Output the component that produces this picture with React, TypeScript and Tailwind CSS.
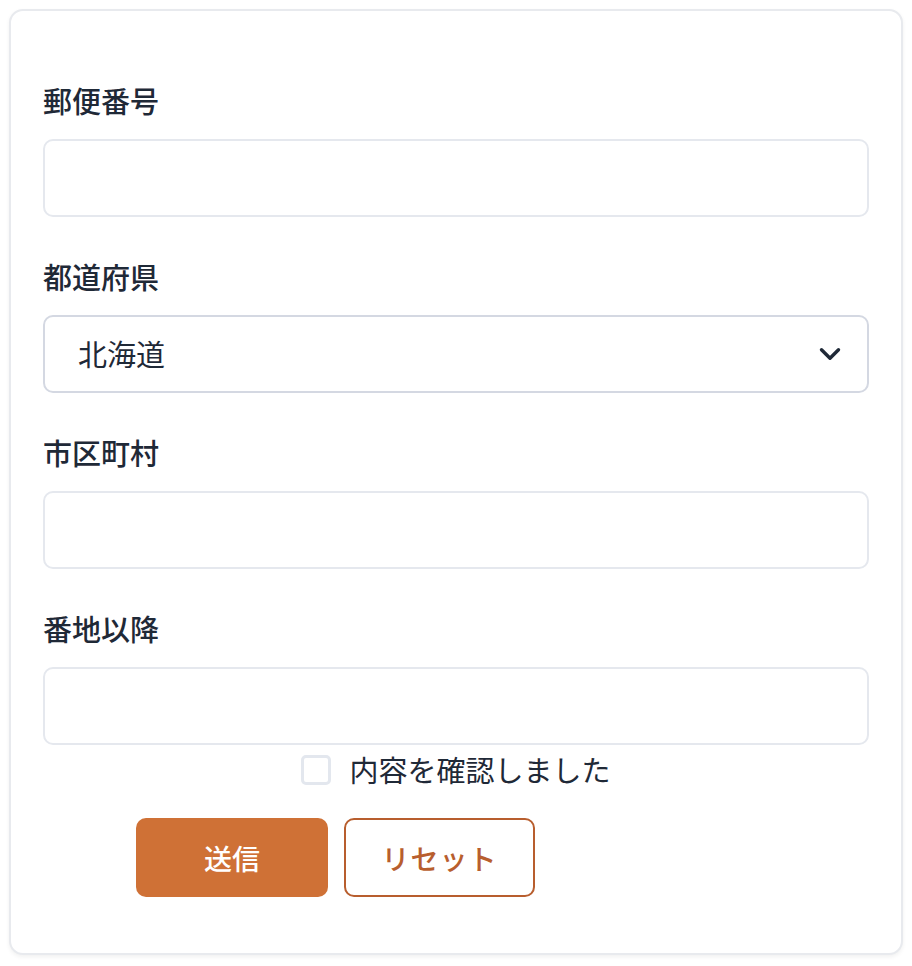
import { ChevronDown } from 'lucide-react';

const fields = [
  { label: '郵便番号', kind: 'input' },
  { label: '都道府県', kind: 'select' },
  { label: '市区町村', kind: 'input' },
  { label: '番地以降', kind: 'input' },
];

function Field({ label, kind }: { label: string; kind: string }) {
  return (
    <div className="flex flex-col">
      <label className="text-[29px] leading-[40px] font-medium text-[#1f2937] mb-[19px]">{label}</label>
      {kind === 'select' ? (
        <div className="relative">
          <select className="w-full h-[78px] appearance-none rounded-[10px] border-2 border-[#d4d8e2] bg-white pl-[33px] text-[29px] text-[#1f2937] outline-none">
            <option>北海道</option>
          </select>
          <ChevronDown
            className="absolute right-[22px] top-1/2 -translate-y-1/2 pointer-events-none text-[#1f2937]"
            size={34}
            strokeWidth={2.4}
          />
        </div>
      ) : (
        <input type="text" className="w-full h-[78px] rounded-[10px] border-2 border-[#e5e8ee] bg-white px-4 text-[29px] outline-none" />
      )}
    </div>
  );
}

export default function App() {
  return (
    <div className="min-h-screen bg-white p-[9px]" style={{ fontFamily: '"Noto Sans CJK JP", "Noto Sans", sans-serif' }}>
      <div className="w-[894px] h-[946px] rounded-[14px] border-2 border-[#e8eaee] bg-white shadow-[0_2px_4px_rgba(0,0,0,0.06)] px-[32px] pt-[69px]">
        <div className="flex flex-col gap-[39px]">
          {fields.map((f) => (
            <Field key={f.label} label={f.label} kind={f.kind} />
          ))}
        </div>
        <div className="flex items-center justify-center gap-[18px] mt-[5px] h-[40px]">
          <span className="w-[30px] h-[30px] rounded-[5px] border-[3px] border-[#e3e7ee] bg-white" />
          <span className="text-[29px] text-[#1f2937]">内容を確認しました</span>
        </div>
        <div className="flex gap-[16px] mt-[28px] pl-[93px]">
          <button className="w-[192px] h-[79px] rounded-[10px] bg-[#cf7136] text-white text-[28px] font-medium">送信</button>
          <button className="w-[191px] h-[79px] rounded-[10px] border-2 border-[#b85e2e] bg-white text-[#b85e2e] text-[28px] font-medium tracking-[1px]">リセット</button>
        </div>
      </div>
    </div>
  );
}
